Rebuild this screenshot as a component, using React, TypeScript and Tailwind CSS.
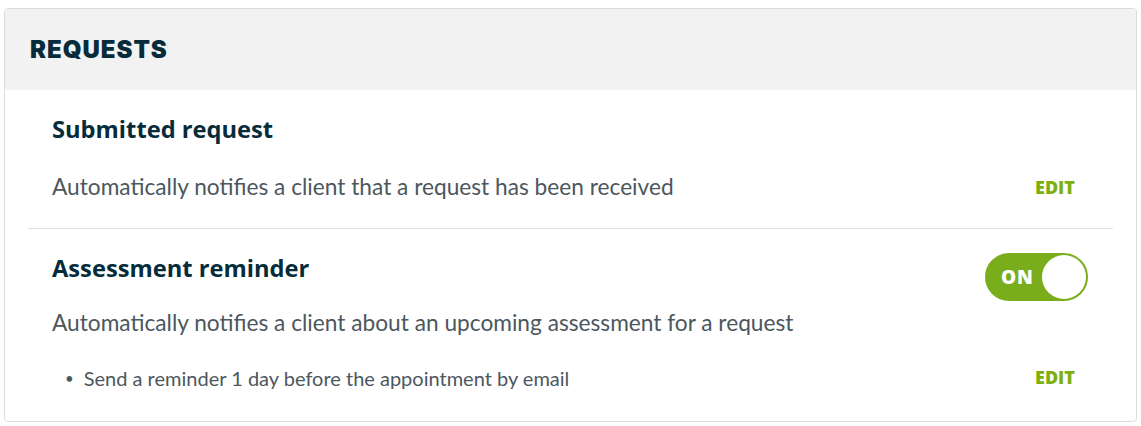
import React, { useState } from "react";

const body = { fontFamily: "Lato, 'Open Sans', sans-serif" };
const heading = { fontFamily: "'Open Sans', Lato, sans-serif" };

function EditButton() {
  return (
    <button
      className="pl-[12px] pr-[14px] text-[18px] font-extrabold uppercase text-[#7db00e]"
      style={heading}
    >
      Edit
    </button>
  );
}

function Toggle() {
  const [on, setOn] = useState(true);
  return (
    <button
      onClick={() => setOn(!on)}
      className={`relative flex h-[48px] w-[103px] items-center rounded-full border-2 ${
        on ? "border-[#7aad1c] bg-[#7aad1c]" : "border-gray-300 bg-gray-200"
      }`}
      style={heading}
    >
      <span className="pl-[14px] text-[19px] font-extrabold tracking-[0.04em] text-white">
        {on ? "ON" : "OFF"}
      </span>
      <span className="absolute right-0 top-0 h-[44px] w-[44px] rounded-full bg-white" />
    </button>
  );
}

export default function App() {
  return (
    <div className="bg-white px-[4px] pt-[8px] pb-[4px]" style={body}>
      <div className="overflow-hidden rounded-[4px] border border-[#dcdcdc] bg-white">
        {/* header */}
        <div className="flex h-[81px] items-center bg-[#f2f2f2] px-[25px]">
          <h2
            className="text-[24px] font-black uppercase tracking-[0.04em] text-[#062b3a]"
            style={{ fontFamily: "Inter, sans-serif" }}
          >
            Requests
          </h2>
        </div>

        <div className="mx-[23px]">
          {/* submitted request */}
          <div className="border-b border-[#e1e1e1] px-[24px] pt-[25px] pb-[27px]">
            <h3 className="text-[23.7px] leading-[28px] font-bold text-[#062b3a]" style={heading}>
              Submitted request
            </h3>
            <div className="mt-[30px] flex items-center justify-between">
              <p className="text-[22.7px] leading-[28px] text-[#4c575e]">
                Automatically notifies a client that a request has been received
              </p>
              <EditButton />
            </div>
          </div>

          {/* assessment reminder */}
          <div className="pl-[24px] pr-[25px] pt-[24px] pb-[30px]">
            <div className="flex items-start justify-between">
              <h3 className="pt-[1px] text-[23.7px] leading-[28px] font-bold text-[#062b3a]" style={heading}>
                Assessment reminder
              </h3>
              <Toggle />
            </div>
            <p className="mt-[8px] text-[22.7px] leading-[28px] text-[#4c575e]">
              Automatically notifies a client about an upcoming assessment for a request
            </p>
            <div className="mt-[27px] flex items-center justify-between">
              <div className="flex items-center text-[20px] leading-[24px] text-[#4c575e]">
                <span className="ml-[13px] mr-[10px] text-[15px]">•</span>
                Send a reminder 1 day before the appointment by email
              </div>
              <span className="-mr-[1px]">
                <EditButton />
              </span>
            </div>
          </div>
        </div>
      </div>
    </div>
  );
}
